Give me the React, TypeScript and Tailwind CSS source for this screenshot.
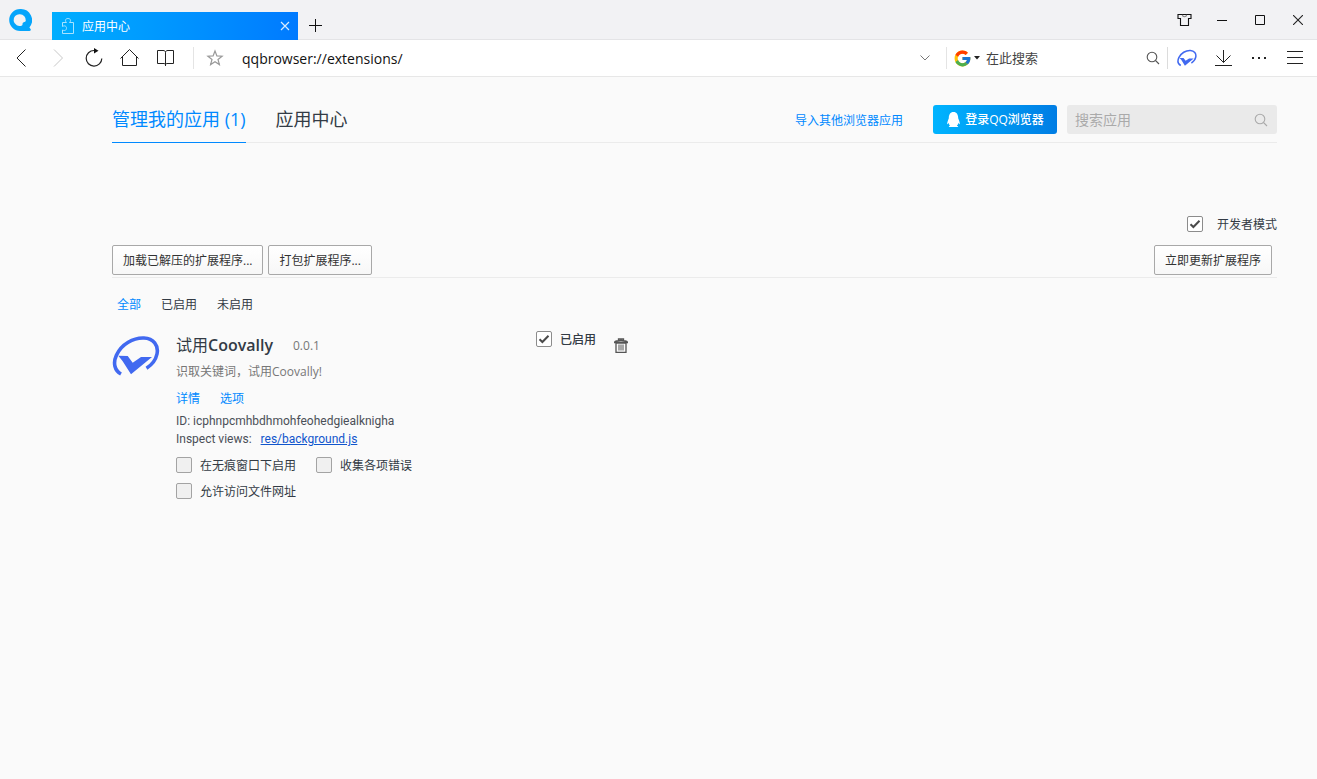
import React, { useState } from 'react';
import { FcGoogle } from 'react-icons/fc';
import { FaQq } from 'react-icons/fa';

const LogoMark: React.FC<{ className?: string; strokeWidth?: number }> = ({ className, strokeWidth = 3.6 }) => (
    <svg viewBox="0 0 48 48" className={className} fill="none" aria-hidden="true">
        <path
            d="M9 42C2.6 38.5 .8 31 4.4 23.2 9.5 12 21.5 5.5 32 6c9.4.4 14.8 7.4 13 16-1.2 5.7-4.8 10.6-10.5 14.2"
            stroke="#4169f0"
            strokeWidth={strokeWidth}
        />
        <path d="M6.3 23.7 15.7 24l5 6.7L29 25h11L19 42.3 10.5 29z" fill="#4169f0" />
    </svg>
);

interface CheckProps {
    label: string;
    defaultChecked?: boolean;
    gap?: string;
    className?: string;
}

const Check: React.FC<CheckProps> = ({ label, defaultChecked = false, gap = 'gap-2', className = '' }) => {
    const [checked, setChecked] = useState(defaultChecked);
    return (
        <label className={`flex h-4 items-center ${gap} ${className}`}>
            <span className="grid h-4 w-4 shrink-0">
                <input
                    type="checkbox"
                    checked={checked}
                    onChange={e => setChecked(e.target.checked)}
                    className="col-start-1 row-start-1 h-4 w-4 appearance-none rounded-[2px] border border-[#a3a3a3] bg-[#f0f0f0] checked:border-[#8c8c8c] checked:bg-white"
                />
                {checked && (
                    <svg viewBox="0 0 16 16" className="pointer-events-none col-start-1 row-start-1 h-4 w-4" fill="none">
                        <path d="M3.5 8.2 6.4 11 12.500 4.800" stroke="#4a4a4a" strokeWidth="2" />
                    </svg>
                )}
            </span>
            <span className="pt-[2px] whitespace-nowrap">{label}</span>
        </label>
    );
};

const iconButton = 'flex h-9 w-9 shrink-0 items-center justify-center';
const windowButton = 'flex h-[39px] w-[38px] items-center justify-center';
const grayButton = 'h-[30px] rounded-[2px] border border-[#a8a8a8] bg-linear-to-b from-white to-[#f7f7f7] px-[10px] pt-[2px] whitespace-nowrap text-[#333]';

const TitleBar: React.FC = () => (
    <header className="flex h-10 items-end border-b border-[#e4e4e6] bg-[#f2f2f4]">
        <div className="flex h-full w-[52px] items-center pl-2">
            <svg viewBox="0 0 24 24" className="h-6 w-6" aria-label="QQ浏览器">
                <path
                    d="M12.2 1a11 11 0 1 0 0 22h9.300c1.300 0 1.700-1.300.9-2.200l-1-1.400A11.200 11.200 0 0 0 12.200 1z"
                    fill="#05a5fb"
                />
                <path d="M12 6.200a5.900 5.900 0 1 0 2 11.200c.8-.4.400-1.400.700-2.300.4-1.200 2.700-.8 3.100-2.400A5.900 5.900 0 0 0 12 6.200z" fill="#f2f2f4" />
            </svg>
        </div>
        <div className="-mb-px flex h-7 w-[246px] items-center bg-linear-to-r from-[#00aeff] to-[#007aff] pr-[7px] pl-2 text-white">
            <svg viewBox="0 0 16 18" className="h-[18px] w-4" fill="none" stroke="#a8e2ff" strokeWidth="1">
                <path d="M6.500 5.500C4.500 3.500 5.500 1.500 8 1.500s3.500 2 1.500 4h4v11h-11v-3.500c3 1.500 4-.5 4-2s-1.500-3-4-1.500V5.500z" />
            </svg>
            <span className="ml-[6px] flex-1 pt-[2px]">应用中心</span>
            <button type="button" aria-label="关闭标签页" className="flex h-3 w-3 items-center justify-center">
                <svg viewBox="0 0 10 10" className="h-[10px] w-[10px]" stroke="#d8ecff" strokeWidth="1.200">
                    <path d="M1 1l8 8M9 1 1 9" />
                </svg>
            </button>
        </div>
        <button type="button" aria-label="新建标签页" className="flex h-[26px] w-9 items-center justify-center">
            <svg viewBox="0 0 14 14" className="h-[14px] w-[14px]" stroke="#111" strokeWidth="1">
                <path d="M6.500 0v13M0 6.500h13" />
            </svg>
        </button>
        <div className="ml-auto flex self-start">
            <button type="button" aria-label="皮肤" className={windowButton}>
                <svg viewBox="0 0 16 16" className="h-4 w-4" fill="none" stroke="#111" strokeWidth="1.100">
                    <path d="M2 2.500h13v4h-2.500v7h-8v-7H2z" />
                    <path d="M6.300 2.800c.5 2.500 3.900 2.500 4.400 0" stroke="#888" />
                </svg>
            </button>
            <button type="button" aria-label="最小化" className={windowButton}>
                <svg viewBox="0 0 10 10" className="h-[10px] w-[10px]" stroke="#111" strokeWidth="1">
                    <path d="M0 5.500h10" />
                </svg>
            </button>
            <button type="button" aria-label="最大化" className={windowButton}>
                <svg viewBox="0 0 10 10" className="h-[10px] w-[10px]" fill="none" stroke="#111" strokeWidth="1">
                    <path d="M.5.5h9v9h-9z" />
                </svg>
            </button>
            <button type="button" aria-label="关闭" className={windowButton}>
                <svg viewBox="0 0 10 10" className="h-[10px] w-[10px]" stroke="#222" strokeWidth="1.100">
                    <path d="M0 0l10 10M10 0 0 10" />
                </svg>
            </button>
        </div>
    </header>
);

const Toolbar: React.FC = () => (
    <nav className="flex h-[37px] items-center border-b border-[#e7e7e7] bg-white pr-1 pl-1">
        <button type="button" aria-label="后退" className={iconButton}>
            <svg viewBox="0 0 20 20" className="h-5 w-5" fill="none" stroke="#222" strokeWidth="1">
                <path d="M13.500 1.500 5 10l8.500 8.500" />
            </svg>
        </button>
        <button type="button" aria-label="前进" className={iconButton}>
            <svg viewBox="0 0 20 20" className="h-5 w-5" fill="none" stroke="#c8c8c8" strokeWidth="1">
                <path d="M6 1.500 14.500 10 6 18.500" />
            </svg>
        </button>
        <button type="button" aria-label="刷新" className={iconButton}>
            <svg viewBox="0 0 20 20" className="h-5 w-5" fill="none" stroke="#222" strokeWidth="1.200">
                <path d="M12.500 2.500H10a7.800 7.800 0 1 0 7.800 8" />
                <path d="M10 0 14.500 2.700 10 5.400z" fill="#111" stroke="none" />
            </svg>
        </button>
        <button type="button" aria-label="主页" className={iconButton}>
            <svg viewBox="0 0 20 20" className="h-5 w-5" fill="none" stroke="#222" strokeWidth="1">
                <path d="M.5 10.500 9.500 1.500l9 9M2.500 8.500v9h14v-9" />
            </svg>
        </button>
        <button type="button" aria-label="书签" className={iconButton}>
            <svg viewBox="0 0 20 20" className="h-5 w-5" fill="none" stroke="#222" strokeWidth="1">
                <path d="M1.500 2.500H7c1.500 0 2.500.5 2.500 2 0-1.500 1-2 2.500-2h5.500v13H12c-1.500 0-2.500 0-2.500 1.500 0-1.500-1-1.500-2.500-1.500H1.500zM9.500 4.500V18" />
            </svg>
        </button>
        <div className="ml-[9px] h-[22px] w-px bg-[#e4e4e4]" />
        <button type="button" aria-label="收藏" className="ml-[3px] flex h-9 w-9 shrink-0 items-center justify-center">
            <svg viewBox="0 0 18 18" className="h-[18px] w-[18px]" fill="none" stroke="#999" strokeWidth="1.200">
                <path d="m9 2 1.900 4.900 5.200.3-4.100 3.300 1.400 5.100L9 12.800l-4.400 2.800L6 10.500 1.900 7.200l5.200-.3z" />
            </svg>
        </button>
        <input
            aria-label="地址栏"
            defaultValue="qqbrowser://extensions/"
            className="ml-[9px] h-8 min-w-0 flex-1 bg-transparent text-[14px] text-[#111] outline-none"
        />
        <button type="button" aria-label="历史地址" className="flex h-9 w-[43px] shrink-0 items-center justify-center">
            <svg viewBox="0 0 10 6" className="h-[6px] w-[10px]" fill="none" stroke="#777" strokeWidth="1">
                <path d="m.5.5 4.500 4.500L9.500.5" />
            </svg>
        </button>
        <div className="h-[22px] w-px bg-[#e4e4e4]" />
        <button type="button" aria-label="搜索引擎" className="ml-[6px] flex h-9 items-center gap-[2px]">
            <FcGoogle size={19} />
            <svg viewBox="0 0 6 4" className="h-1 w-[6px]" fill="#222">
                <path d="M0 0h6L3 3.500z" />
            </svg>
        </button>
        <input
            aria-label="在此搜索"
            placeholder="在此搜索"
            className="ml-[6px] h-8 w-[152px] bg-transparent text-[13px] text-[#333] outline-none placeholder:text-[#444]"
        />
        <button type="button" aria-label="搜索" className="flex h-9 w-[29px] shrink-0 items-center justify-center">
            <svg viewBox="0 0 14 14" className="h-[14px] w-[14px]" fill="none" stroke="#555" strokeWidth="1.100">
                <circle cx="6" cy="6" r="4.800" />
                <path d="m9.500 9.500 3.500 3.500" />
            </svg>
        </button>
        <div className="h-[22px] w-px bg-[#dcdcdc]" />
        <button type="button" aria-label="试用Coovally" className="ml-px flex h-9 w-9 shrink-0 items-center justify-center">
            <LogoMark className="h-5 w-5" strokeWidth={3.6} />
        </button>
        <button type="button" aria-label="下载" className={iconButton}>
            <svg viewBox="0 0 18 18" className="h-[18px] w-[18px]" fill="none" stroke="#222" strokeWidth="1">
                <path d="M9.500 1v12.500M2.500 6.500l7 7 7-7M1 16.500h17" />
            </svg>
        </button>
        <button type="button" aria-label="更多" className={iconButton}>
            <svg viewBox="0 0 14 2" className="h-[2px] w-[14px]" fill="#222">
                <path d="M0 0h2v2H0zM6 0h2v2H6zM12 0h2v2h-2z" />
            </svg>
        </button>
        <button type="button" aria-label="菜单" className={iconButton}>
            <svg viewBox="0 0 16 14" className="h-[14px] w-4" stroke="#222" strokeWidth="1">
                <path d="M0 .5h16M0 6.500h16M0 12.500h16" />
            </svg>
        </button>
    </nav>
);

const PageHeader: React.FC = () => (
    <div className="flex h-[38px] items-start border-b border-[#ebebeb] leading-[29px]">
        <a href="#mine" className="h-[38px] shrink-0 border-b border-[#0089ff] text-[18px] text-[#0089ff]">
            管理我的应用 (1)
        </a>
        <a href="#store" className="ml-[30px] shrink-0 text-[18px] text-[#333b45]">应用中心</a>
        <a href="#import" className="ml-auto pt-px text-[#0089ff]">导入其他浏览器应用</a>
        <button
            type="button"
            className="ml-[30px] flex h-[29px] w-[124px] items-center justify-center gap-1 rounded-[3px] bg-linear-to-r from-[#00b4ff] to-[#007de4] font-medium text-white"
        >
            <FaQq size={15} />
            <span className="whitespace-nowrap">登录QQ浏览器</span>
        </button>
        <div className="ml-[10px] flex h-[29px] w-[210px] items-center rounded-[3px] bg-[#eaeaea] pr-[9px] pl-2">
            <input
                aria-label="搜索应用"
                placeholder="搜索应用"
                className="h-full min-w-0 flex-1 bg-transparent text-[14px] outline-none placeholder:text-[#aaa]"
            />
            <svg viewBox="0 0 14 14" className="h-[14px] w-[14px]" fill="none" stroke="#aaa" strokeWidth="1.100">
                <circle cx="6" cy="6" r="4.800" />
                <path d="m9.500 9.500 3.500 3.500" />
            </svg>
        </div>
    </div>
);

const ExtensionItem: React.FC = () => (
    <section className="mt-[18px] flex items-start text-[#333b45]">
        <LogoMark className="mt-px h-12 w-12 shrink-0" />
        <div className="mt-[2px] ml-4 w-[360px] leading-[18px]">
            <div className="flex h-6 items-center">
                <h2 className="text-[16px]">
                    试用<span className="font-semibold">Coovally</span>
                </h2>
                <span className="ml-5 pt-[2px] text-[#777]">0.0.1</span>
            </div>
            <p className="mt-[6px] text-[#777]">识取关键词，试用Coovally!</p>
            <div className="mt-[9px] flex gap-5 text-[#0089ff]">
                <a href="#details">详情</a>
                <a href="#options">选项</a>
            </div>
            <div className="mt-1 font-['Roboto',sans-serif] text-[#4a4f57]">
                <p>ID: icphnpcmhbdhmohfeohedgiealknigha</p>
                <p>
                    Inspect views:
                    <a href="#background" className="ml-[9px] text-[#1155cc] underline">res/background.js</a>
                </p>
            </div>
            <div className="mt-[9px] flex flex-wrap gap-x-5 gap-y-[10px]">
                <Check label="在无痕窗口下启用" />
                <Check label="收集各项错误" />
                <Check label="允许访问文件网址" />
            </div>
        </div>
        <Check label="已启用" defaultChecked className="font-medium" />
        <button type="button" aria-label="删除" className="mt-[7px] ml-[17px] flex h-4 w-4 items-center justify-center">
            <svg viewBox="0 0 14 16" className="h-4 w-[14px]" fill="none" stroke="#555" strokeWidth="1.300">
                <path d="M4.500 2.500V1h5v1.500M.3 4.500C1 3 3 2.500 7 2.500s6 .5 6.700 2zM2 5v9.300h10V5z" />
                <path d="M5 6.500v6M7 6.500v6M9 6.500v6" strokeWidth="1" />
            </svg>
        </button>
    </section>
);

const filters = ['全部', '已启用', '未启用'];

export default function App() {
    const [activeFilter, setActiveFilter] = useState('全部');

    return (
        <div className="min-h-screen bg-[#fafafa] font-['Open_Sans','Noto_Sans_CJK_SC',sans-serif] text-[12px] leading-4">
            <TitleBar />
            <Toolbar />
            <main className="pt-7 pr-10 pb-10 pl-28">
                <PageHeader />

                {/* Developer tools */}
                <div className="mt-[73px] flex justify-end text-[#333b45]">
                    <Check label="开发者模式" defaultChecked gap="gap-[14px]" />
                </div>
                <div className="mt-[13px] flex gap-[5px] border-b border-[#ebebeb] pr-[5px] pb-[2px]">
                    <button type="button" className={grayButton}>加载已解压的扩展程序...</button>
                    <button type="button" className={grayButton}>打包扩展程序...</button>
                    <button type="button" className={`ml-auto ${grayButton}`}>立即更新扩展程序</button>
                </div>

                {/* Filters */}
                <div className="mt-[19px] flex gap-5 pl-[5px]">
                    {filters.map(name => (
                        <button
                            key={name}
                            type="button"
                            onClick={() => setActiveFilter(name)}
                            className={activeFilter === name ? 'text-[#0089ff]' : 'text-[#333b45]'}
                        >
                            {name}
                        </button>
                    ))}
                </div>

                <ExtensionItem />
            </main>
        </div>
    );
}
